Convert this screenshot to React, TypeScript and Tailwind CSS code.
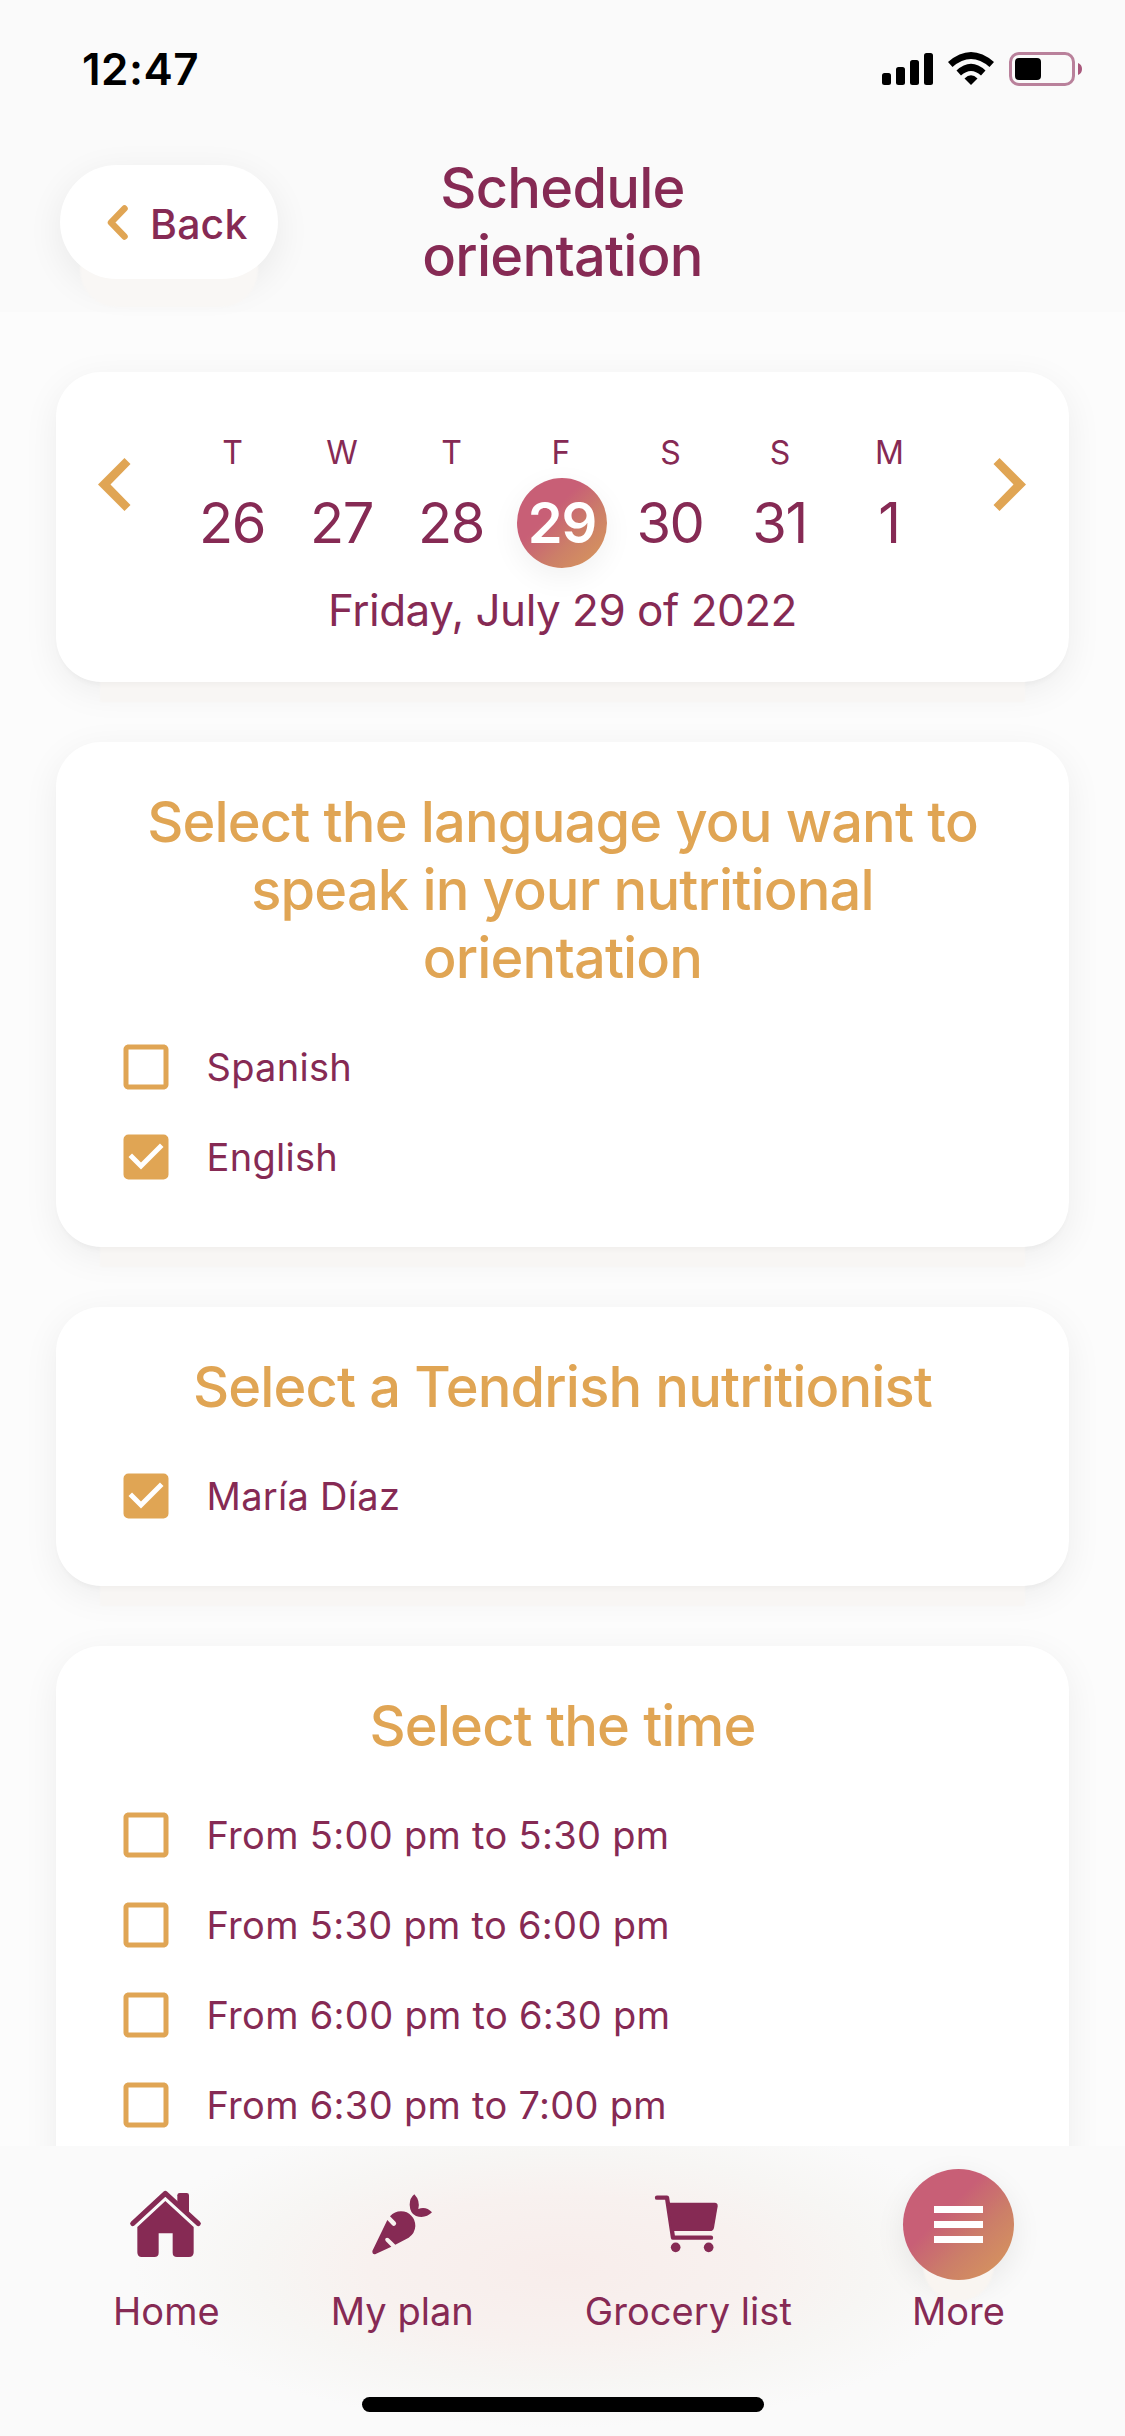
import React, { useState } from "react";
import { MdCheckBox, MdCheckBoxOutlineBlank } from "react-icons/md";

interface Day {
  letter: string;
  number: number;
}

const days: Day[] = [
  { letter: "T", number: 26 },
  { letter: "W", number: 27 },
  { letter: "T", number: 28 },
  { letter: "F", number: 29 },
  { letter: "S", number: 30 },
  { letter: "S", number: 31 },
  { letter: "M", number: 1 },
];

const languages = ["Spanish", "English"];
const nutritionists = ["María Díaz"];
const times = [
  "From 5:00 pm to 5:30 pm",
  "From 5:30 pm to 6:00 pm",
  "From 6:00 pm to 6:30 pm",
  "From 6:30 pm to 7:00 pm",
];

const StatusBar: React.FC = () => (
  <div className="flex h-[138px] items-center justify-between pl-[82px] pr-[43px] text-black">
    <span className="text-[44px] font-semibold tracking-[0.5px]">12:47</span>
    <svg width="202" height="34" viewBox="0 0 202 34">
      <rect x="2" y="21" width="9" height="12" rx="2.5" />
      <rect x="16" y="15" width="9" height="18" rx="2.5" />
      <rect x="30" y="8" width="9" height="25" rx="2.5" />
      <rect x="44" y="1" width="9" height="32" rx="2.5" />
      <path d="M68 10Q91 -10 114 10L109.500 15Q91 -1 72.500 15Z" />
      <path d="M76.500 18.500Q91 5 105.500 18.500L101 23.500Q91 14.500 81 23.500Z" />
      <path d="M84.500 26.500Q91 20 97.500 26.500L91 33Z" />
      <rect x="130.500" y="1.500" width="63" height="31" rx="8.500" fill="none" stroke="#b9819b" strokeWidth="3" />
      <rect x="135" y="6" width="26" height="22" rx="4" />
      <path d="M198 11q4 1.500 4 6t-4 6z" fill="#a9587c" />
    </svg>
  </div>
);

const Arrow: React.FC<{ flip?: boolean }> = ({ flip }) => (
  <svg
    width="33"
    height="53"
    viewBox="0 0 33 53"
    fill="#e0a554"
    className={flip ? "mt-[26px] -scale-x-100" : "mt-[26px]"}
  >
    <path d="M0 26.500L26.500 0L32.500 6L12.500 26.500L32.500 47L26.500 53Z" />
  </svg>
);

const Card: React.FC<{ title: string; children: React.ReactNode }> = ({ title, children }) => (
  <section className="shrink-0 rounded-[45px] bg-white pt-[46px] pb-[45px] shadow-[0_5px_5px_-2px_#00000008,0_64px_2px_-44px_#f8f6f4,0_9px_36px_#00000010]">
    <h2 className="mb-[30px] px-15 text-center text-[56px] leading-[68px] font-medium tracking-[-0.85px] text-[#e0a554]">
      {title}
    </h2>
    {children}
  </section>
);

interface OptionProps {
  label: string;
  checked: boolean;
  onClick: () => void;
}

const Option: React.FC<OptionProps> = ({ label, checked, onClick }) => (
  <button onClick={onClick} className="flex h-[90px] items-center gap-[31px] pl-[59.5px]">
    {checked ? (
      <MdCheckBox className="size-[60px] text-[#e0a554]" />
    ) : (
      <MdCheckBoxOutlineBlank className="size-[60px] text-[#e0a554]" />
    )}
    <span className="text-[38px] tracking-[0.3px]">{label}</span>
  </button>
);

const HomeIcon = () => (
  <svg width="90" height="90" viewBox="0 0 270 270" fill="currentColor">
    <path d="M35 131L133 40L232 131" fill="none" stroke="currentColor" strokeWidth="15" strokeLinecap="round" strokeLinejoin="round" />
    <path d="M169 70V46Q169 39 176 39H197Q204 39 204 46V103Z" />
    <path d="M133 63L218 141V217Q218 231 204 231H168Q155 231 155 218V160H113V218Q113 231 100 231H62Q49 231 49 217V141Z" />
  </svg>
);

const CarrotIcon = () => (
  <svg width="90" height="90" viewBox="-9 0 270 270" fill="currentColor">
    <path d="M82 120L96 135Q101 140 106 136Q111 131 107 126L90 109Q104 94 123 94Q142 94 154 107Q166 119 166 138Q165 160 146 173L106 194L86 175Q81 171 77 175Q74 179 77 183L94 200L47 222Q37 225 37 213Z" />
    <path d="M163 43Q149 54 149 74Q150 100 168 108Q196 117 216 97Q198 78 175 87Q181 62 163 43Z" />
  </svg>
);

const CartIcon = () => (
  <svg width="90" height="90" viewBox="-3 0 270 270" fill="currentColor">
    <path d="M39 53H69L87 173H201" fill="none" stroke="currentColor" strokeWidth="13" strokeLinecap="round" strokeLinejoin="round" />
    <path d="M73 68H212Q222 68 221 79L210 143Q208 153 198 153H84Z" />
    <circle cx="95" cy="202" r="14.500" />
    <circle cx="194" cy="202" r="14.500" />
  </svg>
);

const MenuIcon = () => (
  <div className="flex size-[111px] flex-col items-center justify-center gap-[8px] rounded-full bg-[linear-gradient(135deg,#c85f76_38%,#cc7f68_65%,#d99a5b_100%)] shadow-[0_41px_2px_-20px_#f9f5f1,0_9px_30px_#00000014]">
    <div className="h-[7px] w-[49px] bg-white" />
    <div className="h-[7px] w-[49px] bg-white" />
    <div className="h-[7px] w-[49px] bg-white" />
  </div>
);

const tabs = [
  { label: "Home", icon: <HomeIcon /> },
  { label: "My plan", icon: <CarrotIcon /> },
  { label: "Grocery list", icon: <CartIcon /> },
  { label: "More", icon: <MenuIcon /> },
];

const App: React.FC = () => {
  const [day, setDay] = useState(29);
  const [language, setLanguage] = useState("English");
  const [nutritionist, setNutritionist] = useState("María Díaz");
  const [time, setTime] = useState("");

  return (
    <div className="flex h-[2436px] w-[1125px] flex-col overflow-hidden bg-[#fcfcfc] font-['Inter','Liberation_Sans',sans-serif] text-[#862a54]">
      <header className="h-[312px] shrink-0 bg-[#fafafa]">
        <StatusBar />
        <div className="grid h-[168px] grid-cols-[1fr_320px_1fr] items-center px-15">
          <button className="flex h-[114px] w-[218px] items-center rounded-full bg-white pl-[47px] shadow-[0_48px_2px_-20px_#f9f7f5,0_9px_36px_#00000012]">
            <svg width="21" height="35" viewBox="0 0 21 35" fill="none" className="mr-[22px]">
              <path d="M17.500 3.500L4 17.500L17.500 31.500" stroke="#e0a554" strokeWidth="6.500" strokeLinecap="round" strokeLinejoin="round" />
            </svg>
            <span className="pt-[5px] text-[41px] font-medium tracking-[0.2px]">Back</span>
          </button>
          <h1 className="text-center text-[56px] leading-[68px] font-medium tracking-[-0.75px]">
            Schedule orientation
          </h1>
        </div>
      </header>

      <main className="flex min-h-0 flex-1 flex-col gap-[60px] overflow-hidden px-14 pt-[60px]">
        <section className="h-[310px] shrink-0 rounded-[45px] bg-white pt-[60px] shadow-[0_5px_5px_-2px_#00000008,0_64px_2px_-44px_#f8f6f4,0_9px_36px_#00000010]">
          <div className="flex justify-between pr-[43px] pl-[42px]">
            <Arrow />
            <div className="flex">
              {days.map((d) => (
                <button
                  key={d.number}
                  onClick={() => setDay(d.number)}
                  className="flex w-[109.5px] flex-col items-center gap-[5px]"
                >
                  <span className="pt-px pr-[2px] text-[32px] leading-[40px]">{d.letter}</span>
                  <span
                    className={
                      d.number === day
                        ? "flex size-[90px] items-center justify-center rounded-full bg-[linear-gradient(135deg,#c85f76_38%,#cc7f68_65%,#d99a5b_100%)] text-[56px] font-semibold tracking-[-1px] text-white shadow-[0_9px_30px_#0000000f]"
                        : "flex size-[90px] items-center justify-center pr-[3px] text-[56px] tracking-[-1.5px]"
                    }
                  >
                    {d.number}
                  </span>
                </button>
              ))}
            </div>
            <Arrow flip />
          </div>
          <p className="mt-[14px] text-center text-[44px] leading-[56px] tracking-[-0.5px]">
            Friday, July 29 of 2022
          </p>
        </section>

        <Card title="Select the language you want to speak in your nutritional orientation">
          {languages.map((l) => (
            <Option key={l} label={l} checked={l === language} onClick={() => setLanguage(l)} />
          ))}
        </Card>

        <Card title="Select a Tendrish nutritionist">
          {nutritionists.map((n) => (
            <Option key={n} label={n} checked={n === nutritionist} onClick={() => setNutritionist(n)} />
          ))}
        </Card>

        <Card title="Select the time">
          {times.map((t) => (
            <Option key={t} label={t} checked={t === time} onClick={() => setTime(t)} />
          ))}
        </Card>
      </main>

      <footer className="h-[290px] shrink-0 bg-[#fafafa] bg-[radial-gradient(ellipse_430px_160px_at_50%_42%,#f8edeb_0%,#f8f1ef_45%,#f7f6f4_72%,#fafafa_100%)] pt-[23px]">
        <nav className="flex justify-evenly pl-[2px]">
          {tabs.map((tab) => (
            <button key={tab.label} className="flex flex-col items-center gap-2">
              <div className="flex h-[111px] items-center">{tab.icon}</div>
              <span className="text-[38px] leading-[46px] tracking-[0.05px]">{tab.label}</span>
            </button>
          ))}
        </nav>
        <div className="mx-auto mt-[63px] h-[15px] w-[402px] rounded-full bg-black" />
      </footer>
    </div>
  );
};

export default App;
